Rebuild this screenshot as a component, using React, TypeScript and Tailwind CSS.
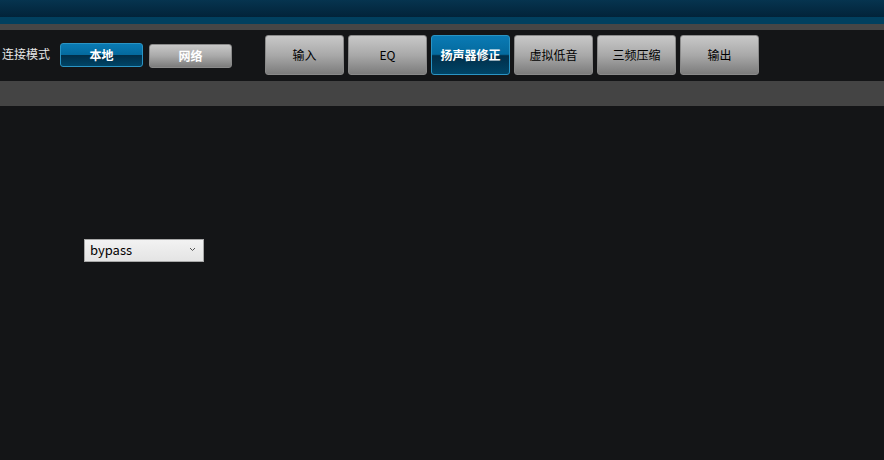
const font = { fontFamily: '"Noto Sans CJK SC", "Noto Sans", sans-serif' };

const tabs = ["输入", "EQ", "扬声器修正", "虚拟低音", "三频压缩", "输出"];

function BlueButton({ label, className }: { label: string; className: string }) {
  return (
    <div
      className={`relative flex items-center justify-center overflow-hidden rounded-[3px] border border-[#2a94c4] bg-[linear-gradient(to_bottom,#0a7ab4_0%,#046a9e_48%,#012f4a_52%,#004466_100%)] text-white font-bold ${className}`}
    >
      {label}
    </div>
  );
}

function GrayButton({ label, className }: { label: string; className: string }) {
  return (
    <div
      className={`flex items-center justify-center rounded-[3px] border border-[#8a8a8a] bg-[linear-gradient(to_bottom,#c8c8c8_0%,#a9a9a9_50%,#7c7c7c_100%)] ${className}`}
    >
      {label}
    </div>
  );
}

export default function App() {
  return (
    <div className="flex h-[460px] w-[884px] flex-col overflow-hidden bg-[#141517]" style={font}>
      <div className="h-[17px] bg-[linear-gradient(to_bottom,#06344f,#022339)]" />
      <div className="h-[7px] bg-[#01405f]" />
      <div className="h-[6px] bg-[#464646]" />
      <div className="flex h-[51px] items-start">
        <span className="ml-[2px] mt-[18px] w-[56px] text-[12px] leading-none text-[#e8e8e8]">连接模式</span>
        <BlueButton label="本地" className="ml-[2px] mt-[13px] h-[24px] w-[83px] text-[12px]" />
        <GrayButton label="网络" className="ml-[6px] mt-[14px] h-[24px] w-[83px] text-[12px] font-bold text-white" />
        <div className="ml-[33px] mt-[5px] flex gap-[4px]">
          {tabs.map((t) =>
            t === "扬声器修正" ? (
              <BlueButton key={t} label={t} className="h-[40px] w-[79px] text-[12px]" />
            ) : (
              <GrayButton key={t} label={t} className="h-[40px] w-[79px] text-[12px] text-black" />
            )
          )}
        </div>
      </div>
      <div className="h-[25px] bg-[#444444]" />
      <div className="flex-1 pl-[84px] pt-[133px]">
        <div className="flex h-[23px] w-[120px] items-center justify-between border border-[#a8a8a8] bg-[linear-gradient(to_bottom,#f2f2f2,#e4e4e4)] pb-[2px] pl-[5px] pr-[7px]">
          <span className="text-[13px] leading-none text-black">bypass</span>
          <svg width="7" height="5" viewBox="0 0 7 5" fill="none">
            <path d="M1 1 L3.5 3.5 L6 1" stroke="#555" strokeWidth="1" />
          </svg>
        </div>
      </div>
    </div>
  );
}
